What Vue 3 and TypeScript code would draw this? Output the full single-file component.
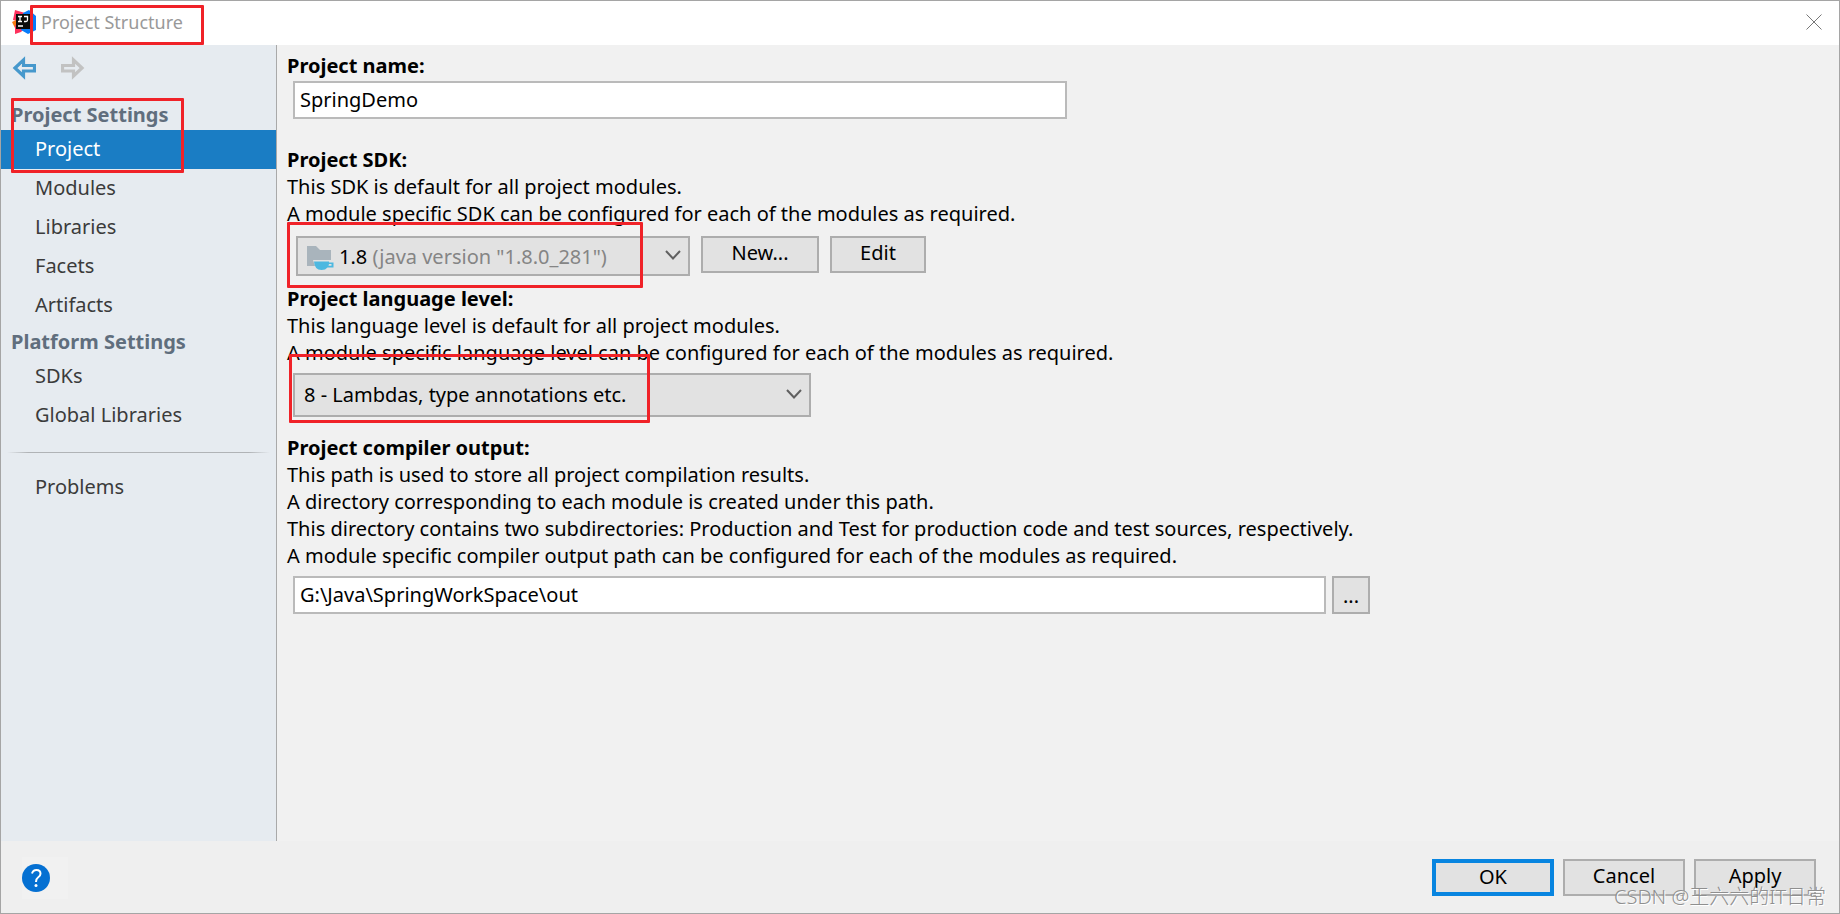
<script setup lang="ts">
import { ref } from 'vue'

interface NavGroup {
  title: string
  items: string[]
  marked?: boolean
}

const groups: NavGroup[] = [
  { title: 'Project Settings', items: ['Project', 'Modules', 'Libraries', 'Facets', 'Artifacts'], marked: true },
  { title: 'Platform Settings', items: ['SDKs', 'Global Libraries'] },
]

const active = ref('Project')
const projectName = ref('SpringDemo')
const sdk = ref('1.8')
const level = ref('8')
const output = ref('G:\\Java\\SpringWorkSpace\\out')
</script>

<template>
  <div class="window">
    <header class="titlebar">
      <svg class="logo" viewBox="0 0 24 24" aria-hidden="true">
        <path d="M3 0 L13 3 L10 12 L1 10 Z" fill="#fe315d" />
        <path d="M0 12 L6 9 L8 18 L3 18 Z" fill="#f97a12" />
        <path d="M3 15 L13 18 L9 22 L3 24 Z" fill="#fe315d" />
        <path d="M11 3 L17 0 L24 6 V20 L16 24 L9 20 Z" fill="#087cfa" />
        <rect x="4" y="4" width="15" height="15" fill="#0b0b0b" />
        <path d="M6 6.500h4M8 6.500v5M6 11.500h4M12 6.500h3.500v3.500q0 1.500-1.500 1.500h-2M6 16h5" fill="none" stroke="#fff" stroke-width="1.300" />
      </svg>
      <h1 class="title">Project Structure</h1>
      <span class="mark mark-title" />
      <button class="close" type="button" aria-label="Close">
        <svg viewBox="0 0 16 16" width="16" height="16"><path d="M.5.5l15 15M15.500.5l-15 15" stroke="#777" fill="none" /></svg>
      </button>
    </header>

    <div class="body">
      <nav class="sidebar">
        <div class="history">
          <button type="button" aria-label="Back">
            <svg viewBox="0 0 24 24" width="24" height="24"><path d="M3 12L11.500 4V9.500h11v5.500h-11V20z" fill="none" stroke="#4698cc" stroke-width="3.200" /></svg>
          </button>
          <button type="button" aria-label="Forward" disabled>
            <svg viewBox="0 0 24 24" width="24" height="24"><path d="M21 12L12.500 4V9.500h-11v5.500h11V20z" fill="none" stroke="#c2c2c2" stroke-width="3.200" /></svg>
          </button>
        </div>
        <section v-for="group in groups" :key="group.title" class="group">
          <h2>{{ group.title }}</h2>
          <button
            v-for="item in group.items"
            :key="item"
            type="button"
            class="item"
            :class="{ active: active === item }"
            @click="active = item"
          >{{ item }}</button>
          <span v-if="group.marked" class="mark mark-nav" />
        </section>
        <hr />
        <button type="button" class="item" :class="{ active: active === 'Problems' }" @click="active = 'Problems'">Problems</button>
      </nav>

      <main class="content">
        <section class="name">
          <label class="heading" for="project-name">Project name:</label>
          <input id="project-name" v-model="projectName" type="text" class="field" />
        </section>

        <section class="sdk">
          <label class="heading" for="project-sdk">Project SDK:</label>
          <p>This SDK is default for all project modules.</p>
          <p>A module specific SDK can be configured for each of the modules as required.</p>
          <div class="row">
            <div class="combo sdk-combo">
              <select id="project-sdk" v-model="sdk">
                <option value="1.8">1.8 (java version "1.8.0_281")</option>
              </select>
              <span class="sdk-value" aria-hidden="true">
                <svg viewBox="0 0 28 28" width="28" height="28">
                  <path d="M1 4h9l4 4h11v16H1z" fill="#a9b4bc" />
                  <path d="M7 18h18v6H9z" fill="#e2e2e2" />
                  <path d="M8 19.500h15v1h4.500v5h-6q-2 2.500-6 2.500q-7 0-7.500-8.500z" fill="#4db8e0" />
                  <path d="M23 22h2.500v1.800H22.500z" fill="#e2e2e2" />
                </svg>
                <span>1.8 <i>(java version "1.8.0_281")</i></span>
              </span>
              <svg class="chevron" viewBox="0 0 16 10" aria-hidden="true"><path d="M1 1l7 7.500L15 1" /></svg>
            </div>
            <button type="button" class="btn new">New...</button>
            <button type="button" class="btn edit">Edit</button>
          </div>
          <span class="mark mark-sdk" />
        </section>

        <section class="level">
          <label class="heading" for="language-level">Project language level:</label>
          <p>This language level is default for all project modules.</p>
          <p>A module specific language level can be configured for each of the modules as required.</p>
          <div class="combo level-combo">
            <select id="language-level" v-model="level">
              <option value="8">8 - Lambdas, type annotations etc.</option>
            </select>
            <svg class="chevron" viewBox="0 0 16 10" aria-hidden="true"><path d="M1 1l7 7.500L15 1" /></svg>
          </div>
          <span class="mark mark-level" />
        </section>

        <section class="output">
          <label class="heading" for="compiler-output">Project compiler output:</label>
          <p>This path is used to store all project compilation results.</p>
          <p>A directory corresponding to each module is created under this path.</p>
          <p>This directory contains two subdirectories: Production and Test for production code and test sources, respectively.</p>
          <p>A module specific compiler output path can be configured for each of the modules as required.</p>
          <div class="path-row">
            <input id="compiler-output" v-model="output" type="text" class="field" />
            <button type="button" class="btn browse" aria-label="Browse">...</button>
          </div>
        </section>
      </main>
    </div>

    <footer class="footer">
      <div class="help-pad">
        <button type="button" class="help" aria-label="Help">
          <svg viewBox="0 0 28 28" width="28" height="28">
            <circle cx="14" cy="14" r="14" fill="#0570d2" />
            <path d="M10 9.500q1-3.500 4.500-3.500q4 0 4 3.800q0 2.200-2.500 3.700q-2 1.300-2 4.500" fill="none" stroke="#fff" stroke-width="2" />
            <circle cx="14" cy="21.500" r="1.500" fill="#fff" />
          </svg>
        </button>
      </div>
      <div class="actions">
        <button type="button" class="btn ok">OK</button>
        <button type="button" class="btn">Cancel</button>
        <button type="button" class="btn">Apply</button>
      </div>
      <span class="watermark">CSDN @王六六的IT日常</span>
    </footer>
  </div>
</template>

<style>
body {
  margin: 0;
}
</style>

<style scoped>
* {
  box-sizing: border-box;
}

.window {
  display: flex;
  flex-direction: column;
  min-height: 100vh;
  border: 1px solid #a5a5a5;
  background: #f1f1f1;
  color: #000;
  font: 20px/27px "Noto Sans", "Noto Sans CJK SC", sans-serif;
}

button,
input,
select {
  margin: 0;
  font: inherit;
  color: inherit;
  border-radius: 0;
}

button {
  padding: 0;
  border: 0;
  background: none;
}

h1,
h2,
p {
  margin: 0;
}

.mark {
  position: absolute;
  border: 3px solid #f02228;
  border-radius: 1px;
  pointer-events: none;
}

.titlebar {
  position: relative;
  display: flex;
  align-items: center;
  height: 44px;
  padding: 0 17px 2px 11px;
  background: #fff;
}

.logo {
  width: 24px;
  height: 24px;
}

.title {
  flex: 1;
  margin-left: 5px;
  font-size: 18px;
  font-weight: 400;
  color: #999;
}

.mark-title {
  left: 29px;
  top: 4px;
  width: 174px;
  height: 40px;
}

.close {
  display: flex;
}

.body {
  display: flex;
  flex: 1;
}

.sidebar {
  width: 276px;
  flex: none;
  border-right: 1px solid #a9a9a9;
  background: #e6ebf0;
  color: #3b3b3b;
}

.history {
  display: flex;
  gap: 25px;
  height: 53px;
  padding: 11px 11px 0;
}

.history button {
  height: 24px;
}

.group {
  position: relative;
}

.group h2 {
  height: 32px;
  padding-left: 10px;
  font-size: 20px;
  font-weight: 700;
  line-height: 34px;
  color: #606e7d;
}

.item {
  display: block;
  width: 100%;
  height: 39px;
  padding: 0 0 2px 34px;
  text-align: left;
}

.item.active {
  background: #1a7dc4;
  color: #fff;
}

.mark-nav {
  left: 10px;
  top: 0;
  width: 173px;
  height: 75px;
}

hr {
  height: 1px;
  margin: 17px 6px 15px;
  border: 0;
  background: linear-gradient(to right, transparent, #b0b3b6 8%, #b0b3b6 92%, transparent);
}

.content {
  flex: 1;
  min-width: 0;
  padding: 7px 10px 20px;
}

.content section {
  position: relative;
}

.heading {
  display: block;
  font-weight: 700;
}

.field {
  display: block;
  height: 38px;
  padding: 0 5px 2px;
  border: 2px solid #bababa;
  background: #fff;
}

.name {
  padding-bottom: 27px;
}

.name .field {
  width: 774px;
  max-width: calc(100% - 6px);
  margin: 2px 0 0 6px;
}

.sdk {
  padding-bottom: 9px;
}

.row {
  display: flex;
  align-items: flex-start;
  gap: 11px;
  margin: 9px 0 0 9px;
}

.combo {
  position: relative;
  background: #e2e2e2;
}

.combo select {
  display: block;
  width: 100%;
  height: 100%;
  padding: 0 40px 2px 9px;
  appearance: none;
  border: 2px solid #adadad;
  background: transparent;
}

.sdk-combo {
  width: 394px;
  height: 40px;
}

.sdk-combo select {
  color: transparent;
}

.sdk-value {
  position: absolute;
  inset: 0 40px 0 10px;
  display: flex;
  align-items: center;
  gap: 5px;
  white-space: nowrap;
  pointer-events: none;
}

.sdk-value i {
  font-style: normal;
  color: #858585;
}

.chevron {
  position: absolute;
  right: 9px;
  top: calc(50% - 6px);
  width: 16px;
  height: 10px;
  fill: none;
  stroke: #606060;
  stroke-width: 2;
  pointer-events: none;
}

.btn {
  height: 37px;
  padding-bottom: 4px;
  border: 2px solid #adadad;
  background: #e2e2e2;
}

.new {
  width: 118px;
}

.edit {
  width: 96px;
}

.mark-sdk {
  left: 0;
  top: 76px;
  width: 356px;
  height: 66px;
}

.level-combo {
  width: 518px;
  height: 44px;
  margin: 7px 0 17px 6px;
}

.mark-level {
  left: 2px;
  top: 69px;
  width: 361px;
  height: 69px;
}

.path-row {
  display: flex;
  gap: 6px;
  width: 1077px;
  max-width: calc(100% - 6px);
  margin: 7px 0 0 6px;
}

.path-row .field {
  flex: 1;
  min-width: 0;
}

.browse {
  width: 38px;
  height: 38px;
  padding: 0;
}

.footer {
  position: relative;
  display: flex;
  justify-content: space-between;
  height: 72px;
  padding: 16px 23px 0 21px;
  background: #efefef;
}

.help-pad {
  display: flex;
  align-items: center;
  width: 46px;
  height: 42px;
  background: #f1f1f1;
}

.help {
  display: flex;
}

.actions {
  display: flex;
  gap: 9px;
  padding-top: 2px;
}

.actions .btn {
  width: 122px;
}

.actions .ok {
  border: 4px solid #0885e0;
}

.watermark {
  position: absolute;
  right: 13px;
  bottom: 3px;
  color: #8f8f8f;
  text-shadow: 1px 1px 0 #fff;
  white-space: nowrap;
  font-weight: 300;
  pointer-events: none;
}
</style>
